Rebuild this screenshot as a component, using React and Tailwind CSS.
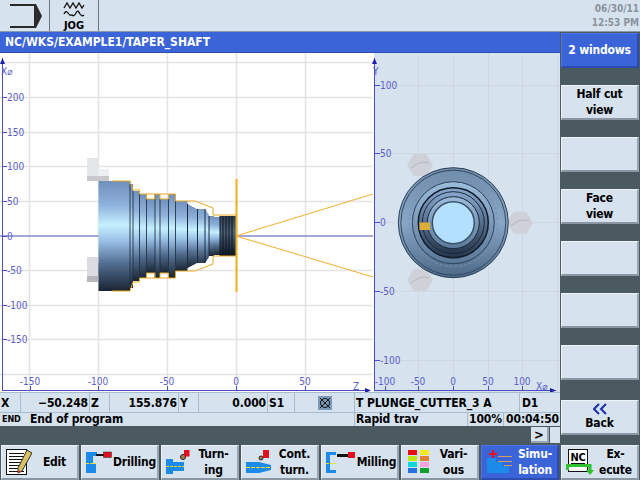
import React from 'react';

const FONT = "font-['DejaVu_Sans_Condensed',sans-serif]";
const FAMILY = 'DejaVu Sans Condensed, sans-serif';

// part profile of the turned shaft: [x, width, half height]
const SHAFT = [
  [98.5, 31.5, 55], [130, 3, 52], [133, 6.5, 45], [139.5, 7, 42], [146.5, 8.5, 37], [155, 5, 42],
  [160, 8.5, 37], [168.5, 7, 42], [175.5, 12, 35],
];

const THREAD = [220, 223, 226, 229, 232];

function Shaft() {
  return (
    <g>
      <line x1="236" y1="236" x2="373" y2="194" stroke="#f0b030" strokeWidth="1" />
      <line x1="236" y1="236" x2="373" y2="277" stroke="#f0b030" strokeWidth="1" />
      <rect x="87" y="158" width="11" height="23" fill="#e4e6ea" />
      <rect x="98" y="169" width="11" height="12" fill="#eeeff2" />
      <rect x="87" y="176" width="22" height="5" fill="#c8c8cc" />
      <rect x="87" y="257" width="22" height="25" fill="#dcdbe2" />
      <rect x="98" y="263" width="11" height="13" fill="#b0b0b8" />
      <rect x="87" y="276" width="11" height="6" fill="#b8b8bc" />
      {SHAFT.map(([x, w, h]) => (
        <g key={x}>
          <rect x={x} y={236 - h} width={w} height={h * 2} fill="url(#steel)" />
          {x > 100 && <line x1={x} y1={236 - h} x2={x} y2={236 + h} stroke="#1c2a3c" strokeOpacity="0.85" />}
        </g>
      ))}
      <path d="M187.5 204 L197 209 L205 209 L209 215 L209 257 L205 263 L197 263 L187.5 268 Z" fill="url(#steel)" />
      <line x1="187.5" y1="204" x2="187.5" y2="268" stroke="#1c2a3c" />
      <line x1="197.5" y1="209" x2="197.5" y2="263" stroke="#1c2a3c" />
      <line x1="205" y1="209" x2="205" y2="263" stroke="#1c2a3c" />
      <rect x="209" y="216" width="5" height="40" fill="url(#steel)" />
      <rect x="214" y="217" width="6" height="38" fill="url(#steel)" />
      <line x1="209" y1="216" x2="209" y2="256" stroke="#1c2a3c" />
      <rect x="220" y="216" width="16" height="40" fill="url(#thread)" />
      {THREAD.map(x => (
        <line key={x} x1={x} y1="216" x2={x} y2="256" stroke="#0c1420" strokeWidth="1" />
      ))}
      <path
        d="M112 181 H130 L133 190 H139.5 V194 H146.5 V199 H155 V194 H160 V199 H168.5 V194 H175.5 V201 H195 L213 208 V215 H236 M112 291 H130 L133 282 H139.5 V278 H146.5 V273 H155 V278 H160 V273 H168.5 V278 H175.5 V271 H195 L213 264 V256 H236 M146.5 194 H155 M160 194 H168.5 M146.5 278 H155 M160 278 H168.5"
        fill="none" stroke="#eaa820" strokeWidth="1"
      />
      <rect x="235.5" y="179" width="2" height="113" fill="#f0b020" />
    </g>
  );
}

function Hex({ cx, cy }) {
  return (
    <g>
      <polygon
        points={`${cx - 13},${cy} ${cx - 6.5},${cy - 11} ${cx + 6.5},${cy - 11} ${cx + 13},${cy} ${cx + 6.5},${cy + 11} ${cx - 6.5},${cy + 11}`}
        fill="#cfd1d8"
      />
      <path d={`M${cx - 9} ${cy + 3} Q${cx} ${cy - 5} ${cx + 9} ${cy - 2}`} stroke="#b4b6be" fill="none" />
    </g>
  );
}

function FaceView() {
  const cx = 453.3;
  const cy = 222.7;
  return (
    <g>
      <Hex cx={420} cy={165} />
      <Hex cx={520} cy={222.7} />
      <Hex cx={420} cy={280} />
      <circle cx={cx} cy={cy} r="55" fill="url(#ring)" stroke="#2c4058" strokeWidth="1" />
      <circle cx={cx} cy={cy} r="52.5" fill="none" stroke="#34485f" strokeWidth="1" />
      <circle cx={cx} cy={cy} r="44" fill="none" stroke="#7890aa" strokeWidth="1" strokeDasharray="3 2" />
      <circle cx={cx} cy={cy} r="41" fill="url(#ring2)" stroke="#2c4058" strokeWidth="1" />
      <circle cx={cx} cy={cy} r="35" fill="url(#ring3)" stroke="#101c2a" strokeWidth="1.5" />
      <circle cx={cx} cy={cy} r="31" fill="url(#ring3)" stroke="#1a2838" strokeWidth="1" />
      <circle cx={cx} cy={cy} r="26" fill="url(#ring2)" stroke="#1a2838" strokeWidth="1" />
      <circle cx={cx} cy={cy} r="21" fill="#b4e0ff" stroke="#3a5066" strokeWidth="1.5" />
      <rect x="419.5" y="222.5" width="10.5" height="7.5" fill="#e0ac38" />
    </g>
  );
}

function PlotPanels() {
  const leftX = [[-150, 30], [-100, 98], [-50, 167], [0, 236], [50, 305]];
  const leftY = [[200, 97], [150, 132], [100, 166], [50, 201], [0, 236], [-50, 270], [-100, 305], [-150, 339]];
  const rightX = [[-100, 385], [-50, 418], [0, 453], [50, 488], [100, 522]];
  const rightY = [[100, 85], [50, 153], [0, 222], [-50, 291], [-100, 360]];
  const labelCls = { fontFamily: FAMILY, fontSize: 10, fill: '#5a5ec8' };
  return (
    <svg width="560" height="339" viewBox="0 53 560 339" className="block">
      <defs>
        <linearGradient id="steel" x1="0" y1="0" x2="0" y2="1">
          <stop offset="0" stopColor="#7090bc" />
          <stop offset="0.22" stopColor="#8fb2dc" />
          <stop offset="0.4" stopColor="#c4f0ff" />
          <stop offset="0.55" stopColor="#98bee4" />
          <stop offset="0.75" stopColor="#526e90" />
          <stop offset="1" stopColor="#182433" />
        </linearGradient>
        <linearGradient id="thread" x1="0" y1="0" x2="0" y2="1">
          <stop offset="0" stopColor="#303e50" />
          <stop offset="0.4" stopColor="#50667e" />
          <stop offset="1" stopColor="#0e1622" />
        </linearGradient>
        <linearGradient id="ring" x1="0" y1="0" x2="0" y2="1">
          <stop offset="0" stopColor="#6f8cab" />
          <stop offset="0.5" stopColor="#88a6c6" />
          <stop offset="1" stopColor="#4c6886" />
        </linearGradient>
        <linearGradient id="ring2" x1="0" y1="0" x2="0" y2="1">
          <stop offset="0" stopColor="#9cbcdc" />
          <stop offset="1" stopColor="#5a7898" />
        </linearGradient>
        <linearGradient id="ring3" x1="0" y1="0" x2="0" y2="1">
          <stop offset="0" stopColor="#88a8d0" />
          <stop offset="1" stopColor="#24364a" />
        </linearGradient>
      </defs>

      <rect x="0" y="53" width="374" height="339" fill="#ffffff" />
      <rect x="374" y="53" width="186" height="339" fill="#d6e2ee" />

      {[29, 98, 167, 236, 305].map(x => <line key={x} x1={x + 0.5} y1="53" x2={x + 0.5} y2="392" stroke="#e4e4e6" strokeWidth="1.5" />)}
      {[62, 97, 132, 166, 201, 270, 305, 339, 374].map(y => <line key={y} x1="0" y1={y + 0.5} x2="373" y2={y + 0.5} stroke="#e4e4e6" strokeWidth="1.5" />)}
      {[418, 453, 488, 522, 557].map(x => <line key={x} x1={x + 0.5} y1="53" x2={x + 0.5} y2="392" stroke="#cfd8e0" />)}
      {[85, 153, 222, 291, 360].map(y => <line key={y} x1="374" y1={y + 0.5} x2="560" y2={y + 0.5} stroke="#cfd8e0" />)}

      <line x1="0" y1="236" x2="373" y2="236" stroke="#8888cc" strokeWidth="1.5" />
      <Shaft />
      <FaceView />

      <line x1="2.5" y1="58" x2="2.5" y2="390" stroke="#4a4ec0" />
      <line x1="2" y1="390.5" x2="370" y2="390.5" stroke="#4a4ec0" />
      <line x1="374.5" y1="58" x2="374.5" y2="390" stroke="#4a4ec0" />
      <line x1="374" y1="390.5" x2="556" y2="390.5" stroke="#4a4ec0" />
      <polygon points="2.5,58 0,64 5,64" fill="#1c20a8" />
      <polygon points="374.5,58 372,64 377,64" fill="#1c20a8" />
      <polygon points="371,390.5 365,388 365,393" fill="#1c20a8" />
      <polygon points="556,390.5 550,388 550,393" fill="#1c20a8" />

      {leftY.map(([v, y]) => (
        <g key={v}>
          <line x1="2" y1={y + 0.5} x2="7" y2={y + 0.5} stroke="#4a4ec0" />
          <text x="7" y={y + 4} style={labelCls}>{v}</text>
        </g>
      ))}
      {leftX.map(([v, x]) => (
        <g key={v}>
          <line x1={x + 0.5} y1="386" x2={x + 0.5} y2="390" stroke="#4a4ec0" />
          <text x={x} y="385" textAnchor="middle" style={labelCls}>{v}</text>
        </g>
      ))}
      {rightY.map(([v, y]) => (
        <g key={v}>
          <line x1="374" y1={y + 0.5} x2="380" y2={y + 0.5} stroke="#4a4ec0" />
          <text x="380" y={y + 4} style={labelCls}>{v}</text>
        </g>
      ))}
      {rightX.map(([v, x]) => (
        <g key={v}>
          <line x1={x + 0.5} y1="386" x2={x + 0.5} y2="390" stroke="#4a4ec0" />
          <text x={x} y="385" textAnchor="middle" style={labelCls}>{v}</text>
        </g>
      ))}
      <text x="1" y="75" style={labelCls}>X⌀</text>
      <text x="353" y="390" style={labelCls}>Z</text>
      <text x="373" y="75" style={labelCls}>Y</text>
      <text x="536" y="390" style={labelCls}>X⌀</text>
    </svg>
  );
}

function Softkey({ active, children, className = '' }) {
  return (
    <div
      className={`flex items-center justify-center border-t border-l border-r-2 border-b-2 text-[12px] tracking-[-0.2px] leading-[16px] font-bold text-center ${
        active
          ? 'bg-[#3a64d8] text-white border-t-[#4a74e8] border-l-[#4a74e8] border-r-[#2c4cb0] border-b-[#2c4cb0]'
          : 'bg-[#d6e2ee] text-black border-t-[#eef3f8] border-l-[#eef3f8] border-r-[#9aa6b2] border-b-[#8a96a2]'
      } ${className}`}
    >
      <div className="w-full">{children}</div>
    </div>
  );
}

const EditIcon = (
  <svg width="26" height="28" viewBox="0 0 26 28">
    <rect x="0.5" y="1.5" width="20" height="25" fill="#fff" stroke="#111" />
    {[5, 8, 11, 14, 17, 20, 23].map(y => <line key={y} x1="3" y1={y + 0.5} x2="18" y2={y + 0.5} stroke="#111" />)}
    <path d="M21 2 L26 5 L16 23 L12 25 L12 20 Z" fill="#d8c060" stroke="#333" />
    <path d="M13 22 L12 25 L15 24 Z" fill="#d02030" />
  </svg>
);

const DrillIcon = (
  <svg width="26" height="26" viewBox="0 0 26 26">
    <path d="M0 3 H11 V7 H7 V15 H10 V24 H0 Z" fill="#1c8ae8" />
    <line x1="0" y1="14.5" x2="10" y2="14.5" stroke="#e8e020" strokeDasharray="3 1" />
    <rect x="10" y="5" width="8" height="2" fill="#111" />
    <rect x="17.5" y="3" width="8" height="5.5" fill="#e01020" stroke="#222" strokeWidth="0.5" />
  </svg>
);

const MillIcon = (
  <svg width="30" height="26" viewBox="0 0 30 26">
    <path d="M0 3 H10 V6 H4 V21 H10 V24 H0 Z" fill="#1c8ae8" />
    <line x1="0" y1="14.5" x2="10" y2="14.5" stroke="#e8e020" strokeDasharray="3 1" />
    <rect x="11" y="5" width="11" height="3" fill="#111" />
    <rect x="22" y="3" width="7" height="6" fill="#e01020" />
  </svg>
);

const TurnIcon = (
  <svg width="24" height="26" viewBox="0 0 24 26">
    <path d="M0 10 H7 V13 H18 V22 H7 V25 H0 Z" fill="#1c8ae8" />
    <line x1="0" y1="17.5" x2="18" y2="17.5" stroke="#e8e020" strokeDasharray="3 1" />
    <circle cx="17" cy="8" r="2.5" fill="#a08050" stroke="#222" />
    <rect x="18" y="1" width="5.5" height="6.5" fill="#e01020" />
  </svg>
);

const ContTurnIcon = (
  <svg width="26" height="26" viewBox="0 0 26 26">
    <path d="M0 13 H13 L25 16 V21 L13 24 H0 Z" fill="#1c8ae8" />
    <line x1="0" y1="18.5" x2="25" y2="18.5" stroke="#e8e020" strokeDasharray="4 1" />
    <circle cx="15" cy="9" r="2" fill="#a08050" stroke="#222" />
    <rect x="17" y="1" width="6" height="8" fill="#e01020" />
  </svg>
);

const VariousIcon = (
  <svg width="22" height="24" viewBox="0 0 22 24">
    {[['#e81010', '#f4e820'], ['#b8e810', '#e08030'], ['#10d8d8', '#f8a0e0'], ['#2870e0', '#10a030']].map(([a, b], i) => (
      <g key={a}>
        <rect x="0" y={i * 6} width="9" height="5" fill={a} />
        <rect x="12" y={i * 6} width="9" height="5" fill={b} />
      </g>
    ))}
  </svg>
);

const SimIcon = (
  <svg width="26" height="24" viewBox="0 0 26 24">
    <path d="M0 8 H9 V12 H16 V16 H22 V23 H0 Z" fill="#1c8ae8" />
    <path d="M2 4 H10 M6 0 V8" stroke="#e81020" strokeWidth="2" />
    {[6, 11].map(y => <line key={y} x1="11" y1={y + 0.5} x2="25" y2={y + 0.5} stroke="#d0a060" />)}
    <line x1="17" y1="15.5" x2="25" y2="15.5" stroke="#d0a060" />
  </svg>
);

const ExecIcon = (
  <svg width="28" height="26" viewBox="0 0 28 26">
    <rect x="2.5" y="0.5" width="19" height="22" fill="#fff" stroke="#111" />
    <text x="12" y="12" textAnchor="middle" style={{ fontFamily: FAMILY, fontSize: 11, fontWeight: 700 }}>NC</text>
    <line x1="5" y1="14.5" x2="19" y2="14.5" stroke="#111" />
    <path d="M0 16.5 H24 V22" stroke="#30c030" strokeWidth="3" fill="none" />
    <polygon points="20,21 28,21 24,26" fill="#30c030" />
    <rect x="0" y="15" width="3" height="6" fill="#30c030" />
  </svg>
);

function Hsk({ icon, label, active, gap = 'pl-[3px]' }) {
  return (
    <Softkey active={active} className="h-[35px] w-[78px]">
      <div className={`flex items-center ${gap}`}>
        <span className="shrink-0 flex items-center">{icon}</span>
        <span className="flex-1 text-center">{label}</span>
      </div>
    </Softkey>
  );
}

const Cell = ({ className = '', children }) => (
  <div className={`border-r border-[#a8bccf] px-[1px] text-[12px] tracking-[-0.1px] font-bold leading-[20px] whitespace-nowrap overflow-hidden ${className}`}>{children}</div>
);

export default function App() {
  return (
    <div className={`w-[640px] h-[480px] overflow-hidden bg-[#4a5a60] flex flex-col ${FONT}`}>
      <header className="h-[32px] bg-[#d6e2ee] flex border-b border-[#8a9aa8]">
        <div className="w-[50px] border-r border-[#6a7680] flex items-center pl-[10px]">
          <svg width="33" height="26" viewBox="0 0 33 26">
            <path d="M0 1 H26 V25 H0 V23 H24 V3 H0 Z" fill="#2a2a2a" />
            <polygon points="26,1 32,13 26,25" fill="#2a2a2a" />
          </svg>
        </div>
        <div className="w-[49px] border-r border-[#6a7680] flex flex-col items-center">
          <svg width="22" height="19" viewBox="0 0 22 19" className="mt-[1px]">
            <path d="M1 7 L4 2 L7 7 L10 2 L13 7 L16 2 L19 7 L21 4" stroke="#111" strokeWidth="1.3" fill="none" />
            <path d="M1 13 Q3 9 5 12 T9 14 Q11 16 13 12 T17 13 Q19 16 21 14" stroke="#111" strokeWidth="1.3" fill="none" />
          </svg>
          <span className="text-[11px] font-bold leading-[11px] text-black">JOG</span>
        </div>
        <div className="flex-1 flex flex-col items-end pr-[1px] pt-[2px] text-[10px] leading-[14px] font-bold text-[#8a929c]">
          <span>06/30/11</span>
          <span>12:53 PM</span>
        </div>
      </header>

      <div className="flex h-[413px]">
        <main className="w-[560px] flex flex-col">
          <div className="h-[21px] bg-[#3a64d8] text-white text-[12px] font-bold leading-[21px] pl-[5px] border-b border-[#2c4cb0]">
            NC/WKS/EXAMPLE1/TAPER_SHAFT
          </div>
          <PlotPanels />
          <div className="h-[20px] flex bg-[#d6e2ee] border-t border-[#a8bccf] text-black">
            <Cell className="w-[21px]">X</Cell>
            <Cell className="w-[69px] text-right">−50.248</Cell>
            <Cell className="w-[20px]">Z</Cell>
            <Cell className="w-[69px] text-right">155.876</Cell>
            <Cell className="w-[20px]">Y</Cell>
            <Cell className="w-[69px] text-right">0.000</Cell>
            <Cell className="w-[27px]">S1</Cell>
            <Cell className="w-[60px] flex items-center justify-center">
              <svg width="14" height="14" viewBox="0 0 14 14">
                <rect width="14" height="14" fill="#7c9ab8" />
                <circle cx="7" cy="7" r="4.5" fill="none" stroke="#111" />
                <path d="M2 2 L12 12 M12 2 L2 12" stroke="#111" />
              </svg>
            </Cell>
            <Cell className="w-[165px]">T PLUNGE_CUTTER_3 A</Cell>
            <Cell className="flex-1 border-r-0 pl-[2px]">D1</Cell>
          </div>
          <div className="h-[14px] flex bg-[#d6e2ee] text-black border-t border-[#a8bccf] [&>div]:leading-[13px]">
            <Cell className="w-[355px] flex items-center">
              <span className="text-[9px] w-[29px] pl-[1px]">END</span>
              <span>End of program</span>
            </Cell>
            <Cell className="w-[113px]">Rapid trav</Cell>
            <Cell className="w-[36px] text-right">100%</Cell>
            <Cell className="flex-1 border-r-0 text-right">00:04:50</Cell>
          </div>
          <div className="flex-1 flex justify-end items-start pt-[1px]">
            <div className="w-[18px] h-[16px] bg-[#d6e2ee] border-r-2 border-b-2 border-[#9aa6b2] text-[13px] leading-[15px] font-bold text-center text-black">&gt;</div>
            <div className="w-[10px] h-[16px] ml-[1px] bg-[#d6e2ee]" />
          </div>
        </main>

        <aside className="flex-1 flex flex-col pl-[1px] pr-[1px] pt-px gap-[17px] text-center">
          <Softkey active className="h-[35px]">2 windows</Softkey>
          <Softkey className="h-[35px]">Half cut<br />view</Softkey>
          <Softkey className="h-[35px]" />
          <Softkey className="h-[35px]">Face<br />view</Softkey>
          <Softkey className="h-[35px]" />
          <Softkey className="h-[35px]" />
          <Softkey className="h-[35px]" />
          <Softkey className="h-[35px] mt-[3px]">
            <svg width="14" height="12" viewBox="0 0 14 12" className="mx-auto">
              <path d="M6 1 L1 6 L6 11 M13 1 L8 6 L13 11" stroke="#1c2cb0" strokeWidth="2" fill="none" />
            </svg>
            Back
          </Softkey>
        </aside>
      </div>

      <footer className="h-[35px] flex gap-[2px] pl-[1px]">
        <Hsk icon={EditIcon} label="Edit" gap="pl-[4px]" />
        <Hsk icon={DrillIcon} label="Drilling" gap="pl-[4px]" />
        <Hsk icon={TurnIcon} label={<>Turn-<br />ing</>} gap="pl-[4px]" />
        <Hsk icon={ContTurnIcon} label={<>Cont.<br />turn.</>} gap="pl-[4px]" />
        <Hsk icon={MillIcon} label="Milling" gap="pl-[4px]" />
        <Hsk icon={VariousIcon} label={<>Vari-<br />ous</>} gap="pl-[6px]" />
        <Hsk active icon={SimIcon} label={<>Simu-<br />lation</>} gap="pl-[5px]" />
        <Hsk icon={ExecIcon} label={<>Ex-<br />ecute</>} gap="pl-[4px]" />
      </footer>
    </div>
  );
}
